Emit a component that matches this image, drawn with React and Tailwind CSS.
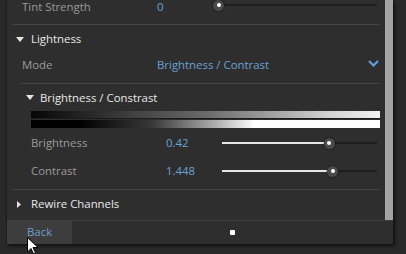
import React from 'react';

const font = { fontFamily: '"Open Sans", "Noto Sans", sans-serif' };

function Slider({ pct }) {
    return (
        <div className="relative flex-1 h-[12px] flex items-center">
            <div className="absolute left-0 right-0 h-[2px] bg-[#1f1f1f]" />
            <div className="absolute left-0 h-[2px] bg-[#e6e6e6]" style={{ width: `${pct}%` }} />
            <div
                className="absolute w-[11px] h-[11px] -ml-[5px] rounded-full bg-[#4a4a4a] shadow-[0_0_2px_rgba(0,0,0,0.8)] flex items-center justify-center"
                style={{ left: `${pct}%` }}
            >
                <div className="w-[4px] h-[4px] rounded-full bg-white" />
            </div>
        </div>
    );
}

function Down() {
    return (
        <svg width="8" height="5" viewBox="0 0 8 5">
            <path d="M0 0 L8 0 L4 5 Z" fill="#e6e6e6" />
        </svg>
    );
}

export default function App() {
    return (
        <div className="w-[406px] h-[254px] bg-[#292929] relative overflow-hidden text-[11.4px]" style={font}>
            <div className="ml-[6px] w-[387px] border-l border-[#1e1e1e] shadow-[2px_2px_3px_rgba(0,0,0,0.6)]">
                <div className="flex h-[220px] bg-[#2e2e2e]">
                    <div className="flex-1 pl-[5px] pr-[5px]">
                        {/* Tint Strength (scrolled off) */}
                        <div className="h-[25px] flex items-start border-b border-[#454545]">
                            <div className="flex items-center h-[13px] w-full pl-[10px]">
                                <span className="w-[135px] text-[#9a9a9a] leading-[13px]">Tint Strength</span>
                                <span className="w-[58px] text-[#6aa2d4] leading-[13px]">0</span>
                                <div className="flex-1 pr-[3px] -mt-[3px]"><Slider pct={2} /></div>
                            </div>
                        </div>

                        {/* Lightness */}
                        <div className="h-[28px] flex items-center pl-[4px] gap-[7px]">
                            <Down />
                            <span className="text-[#e8e8e8]">Lightness</span>
                        </div>
                        <div className="pl-[9px]">
                            <div className="h-[30px] border-b border-[#454545]">
                                <div className="h-[22px] mt-[1px] flex items-center">
                                    <span className="w-[136px] pl-[1px] text-[#9a9a9a]">Mode</span>
                                    <span className="flex-1 text-[#6aa2d4]">Brightness / Contrast</span>
                                    <svg width="11" height="7" viewBox="0 0 11 7" className="mr-[1px] -mt-[3px]">
                                        <path d="M1 1 L5.5 5.5 L10 1" stroke="#5d9fd6" strokeWidth="2.2" fill="none" />
                                    </svg>
                                </div>
                            </div>

                            {/* Brightness / Contrast */}
                            <div className="h-[25px] flex items-center pt-[2px] pl-[5px] gap-[6px]">
                                <Down />
                                <span className="text-[#e8e8e8]">Brightness / Constrast</span>
                            </div>
                            <div className="pl-[10px]">
                                <div className="h-[7px] mt-[2px] bg-[linear-gradient(to_right,#050505,#1a1a1a_10%,#6a6a6a_50%,#d0d0d0_85%,#f2f2f2)]" />
                                <div className="h-[1px] bg-[#1a1a1a]" />
                                <div className="h-[8px] mt-[1px] bg-[linear-gradient(to_right,#000_0%,#000_14%,#3a3a3a_35%,#bdbdbd_55%,#ffffff_64%,#ffffff)]" />
                                <div className="h-[28px] flex items-center mt-[1px]">
                                    <span className="w-[135px] text-[#9a9a9a]">Brightness</span>
                                    <span className="w-[56px] text-[#6aa2d4]">0.42</span>
                                    <div className="flex-1 pr-[3px]"><Slider pct={69} /></div>
                                </div>
                                <div className="h-[28px] flex items-center">
                                    <span className="w-[135px] text-[#9a9a9a]">Contrast</span>
                                    <span className="w-[56px] text-[#6aa2d4]">1.448</span>
                                    <div className="flex-1 pr-[3px]"><Slider pct={71} /></div>
                                </div>
                            </div>
                        </div>
                        <div className="h-[5px] border-b border-[#454545]" />

                        {/* Rewire Channels */}
                        <div className="h-[30px] flex items-center pb-[2px] pl-[5px] gap-[10px]">
                            <svg width="4" height="7" viewBox="0 0 4 7">
                                <path d="M0 0 L4 3.5 L0 7 Z" fill="#e6e6e6" />
                            </svg>
                            <span className="text-[#e8e8e8]">Rewire Channels</span>
                        </div>
                    </div>
                    <div className="w-[8px] bg-[#a3a3a3]" />
                </div>

                {/* Bottom bar */}
                <div className="h-[24px] flex items-center bg-[#2e2e2e] border-t border-[#3f3f3f]">
                    <div className="w-[65px] h-full bg-[#3d3d3d] flex items-center pl-[20px] pb-[1px] text-[#6d9fcc]">Back</div>
                    <div className="flex-1 flex justify-center">
                        <div className="w-[5px] h-[5px] bg-white rounded-[1px]" />
                    </div>
                </div>
            </div>

            {/* Mouse cursor */}
            <svg width="12" height="18" viewBox="0 0 12 18" className="absolute left-[27px] top-[237px]">
                <path d="M0.5 0.5 L0.5 15 L4 11.5 L6.5 17 L8.5 16 L6 10.5 L11 10.5 Z" fill="white" stroke="black" strokeWidth="1" />
            </svg>
        </div>
    );
}
